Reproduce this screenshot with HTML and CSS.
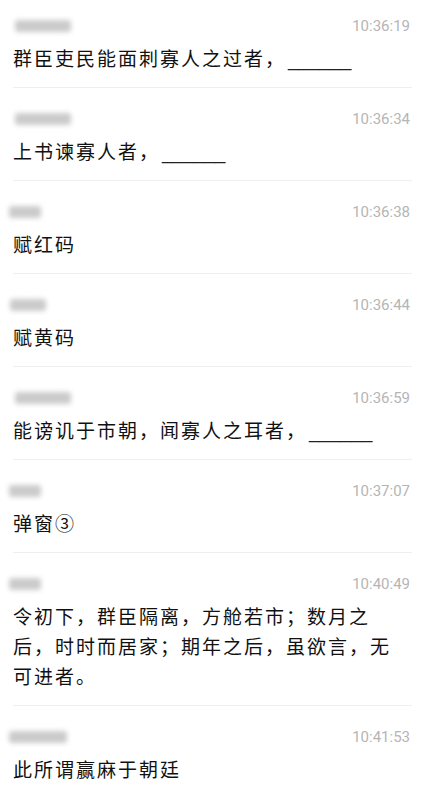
FILE: index.html
```html
<!DOCTYPE html>
<html lang="zh-CN">
<head>
<meta charset="utf-8">
<title>消息</title>
<link rel="stylesheet" href="styles.css">
</head>
<body>
<ul class="list">
  <li class="item">
    <div class="head"><span class="name name-long"></span><span class="time">10:36:19</span></div>
    <p class="msg">群臣吏民能面刺寡人之过者，<span class="blank">______</span></p>
  </li>
  <li class="item">
    <div class="head"><span class="name name-long"></span><span class="time">10:36:34</span></div>
    <p class="msg">上书谏寡人者，<span class="blank">______</span></p>
  </li>
  <li class="item">
    <div class="head"><span class="name name-short"></span><span class="time">10:36:38</span></div>
    <p class="msg">赋红码</p>
  </li>
  <li class="item">
    <div class="head"><span class="name name-mid"></span><span class="time">10:36:44</span></div>
    <p class="msg">赋黄码</p>
  </li>
  <li class="item">
    <div class="head"><span class="name name-long"></span><span class="time">10:36:59</span></div>
    <p class="msg">能谤讥于市朝，闻寡人之耳者，<span class="blank">______</span></p>
  </li>
  <li class="item">
    <div class="head"><span class="name name-short"></span><span class="time">10:37:07</span></div>
    <p class="msg">弹窗③</p>
  </li>
  <li class="item">
    <div class="head"><span class="name name-short"></span><span class="time">10:40:49</span></div>
    <p class="msg">令初下，群臣隔离，方舱若市；数月之后，时时而居家；期年之后，虽欲言，无可进者。</p>
  </li>
  <li class="item">
    <div class="head"><span class="name name-wide"></span><span class="time">10:41:53</span></div>
    <p class="msg">此所谓赢麻于朝廷</p>
  </li>
</ul>
</body>
</html>
```

FILE: styles.css
```css
html, body {
  margin: 0;
  padding: 0;
  background: #ffffff;
}

.list {
  list-style: none;
  margin: 0;
  padding: 0 18px 0 13px;
}

.item {
  padding: 21px 0 14px;
  border-bottom: 1px solid #efefef;
}

.item:first-child {
  padding-top: 16px;
}

.item:last-child {
  border-bottom: none;
}

.head {
  display: flex;
  justify-content: space-between;
  align-items: center;
  height: 20px;
}

.name {
  display: block;
  height: 12px;
  background: #c2c2c2;
  border-radius: 3px;
  filter: blur(2.5px);
  opacity: 0.85;
  margin-top: -1px;
}

.name-long { width: 56px; margin-left: 2px; }
.name-short { width: 32px; margin-left: -4px; }
.name-mid { width: 36px; margin-left: -3px; }
.name-wide { width: 58px; margin-left: -4px; }

.time {
  font-family: Roboto, "Liberation Sans", sans-serif;
  font-size: 15px;
  line-height: 20px;
  color: #b5b5b5;
  padding-right: 2px;
}

.msg {
  margin: 7px 0 0;
  width: 395px;
  font-family: "Noto Sans CJK SC", "Noto Sans", sans-serif;
  font-size: 19px;
  line-height: 30px;
  letter-spacing: 2px;
  color: #111111;
}

.blank {
  font-family: "Liberation Sans", Arial, sans-serif;
  line-height: 1;
  letter-spacing: 0;
  margin-left: 2px;
  color: #222222;
}
```
